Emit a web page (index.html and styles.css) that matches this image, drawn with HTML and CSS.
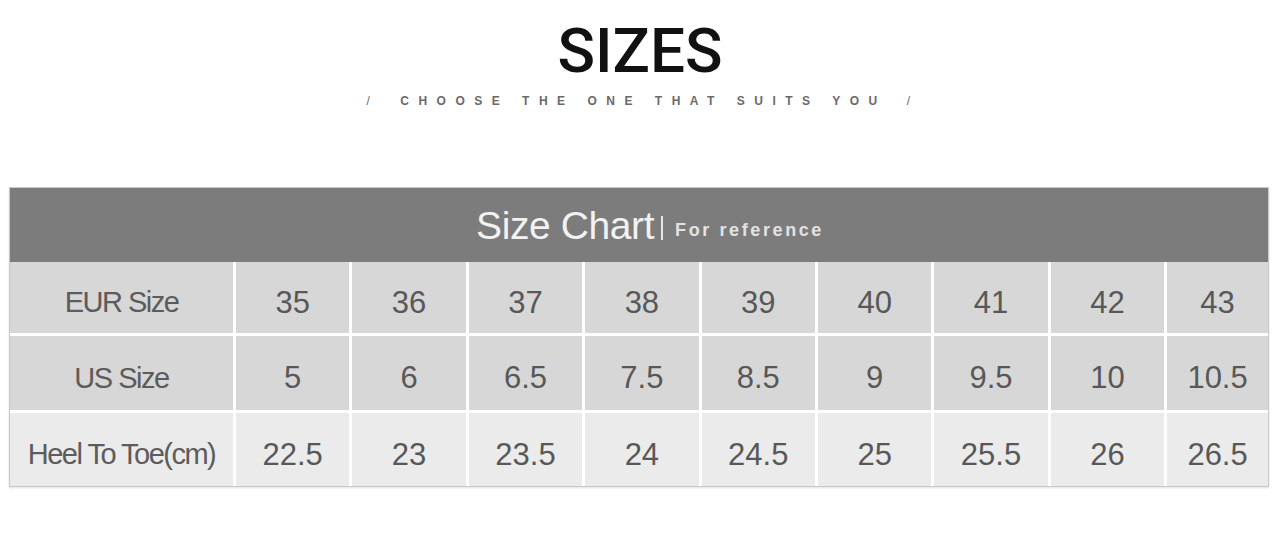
FILE: index.html
```html
<!DOCTYPE html>
<html lang="en">
<head>
<meta charset="utf-8">
<title>Sizes</title>
<link rel="stylesheet" href="styles.css">
</head>
<body>
<header class="intro">
  <h1 class="title">SIZES</h1>
  <p class="subtitle"><span class="slash">/</span>CHOOSE THE ONE THAT SUITS YOU<span class="slash slash-end">/</span></p>
</header>
<section class="chart">
  <div class="chart-head">
    <span class="chart-title">Size Chart</span><span class="chart-bar"></span><span class="chart-note">For reference</span>
  </div>
  <div class="grid">
    <div class="cell label r1">EUR Size</div>
    <div class="cell r1">35</div><div class="cell r1">36</div><div class="cell r1">37</div><div class="cell r1">38</div><div class="cell r1">39</div><div class="cell r1">40</div><div class="cell r1">41</div><div class="cell r1">42</div><div class="cell r1">43</div>
    <div class="cell label r2">US Size</div>
    <div class="cell r2">5</div><div class="cell r2">6</div><div class="cell r2">6.5</div><div class="cell r2">7.5</div><div class="cell r2">8.5</div><div class="cell r2">9</div><div class="cell r2">9.5</div><div class="cell r2">10</div><div class="cell r2">10.5</div>
    <div class="cell label r3">Heel To Toe(cm)</div>
    <div class="cell r3">22.5</div><div class="cell r3">23</div><div class="cell r3">23.5</div><div class="cell r3">24</div><div class="cell r3">24.5</div><div class="cell r3">25</div><div class="cell r3">25.5</div><div class="cell r3">26</div><div class="cell r3">26.5</div>
  </div>
</section>
</body>
</html>
```
FILE: styles.css
```css
html, body {
  margin: 0;
  padding: 0;
  background: #ffffff;
}
body {
  font-family: "Liberation Sans", Arial, sans-serif;
  width: 1280px;
  height: 550px;
  overflow: hidden;
}
.intro {
  padding-top: 20px;
  text-align: center;
}
.title {
  margin: 0;
  font-family: Roboto, "Liberation Sans", sans-serif;
  font-size: 62px;
  line-height: 1;
  font-weight: 500;
  color: #111111;
}
.subtitle {
  margin: 13px 0 0 0;
  font-size: 12px;
  line-height: 1;
  font-weight: 700;
  letter-spacing: 9.5px;
  color: #6a6a6a;
  padding-left: 6px;
}
.slash {
  font-weight: 400;
  margin-right: 21px;
}
.slash-end {
  margin-right: 0;
  margin-left: 20px;
}
.chart {
  width: 1260px;
  margin: 80px 0 0 9px;
  border: 1px solid #c9c9c9;
  box-shadow: 0 1px 2px rgba(0,0,0,0.12);
  background: #ffffff;
  box-sizing: border-box;
}
.chart-head {
  height: 74px;
  background: #7c7c7c;
  display: flex;
  align-items: center;
  justify-content: center;
  padding-left: 22px;
  padding-top: 2px;
  box-sizing: border-box;
}
.chart-title {
  font-size: 39px;
  color: #f2f2f2;
  letter-spacing: -0.4px;
}
.chart-bar {
  display: inline-block;
  width: 2px;
  height: 24px;
  background: #e6e6e6;
  margin: 4px 12px 0 7px;
}
.chart-note {
  font-size: 18px;
  font-weight: 700;
  color: #e2e2e2;
  letter-spacing: 2.6px;
  margin-top: 8px;
}
.grid {
  display: grid;
  grid-template-columns: 223px repeat(8, 113.4px) 1fr;
  grid-template-rows: 71px 74px 73px;
  gap: 3px;
  background: #ffffff;
}
.cell {
  display: flex;
  align-items: center;
  justify-content: center;
  padding-top: 10px;
  box-sizing: border-box;
  font-size: 31px;
  color: #585858;
}
.label {
  font-size: 29px;
  letter-spacing: -1.5px;
  color: #5c5c5c;
}
.r1, .r2 {
  background: #d7d7d7;
}
.r3 {
  background: #ebebeb;
}
```
